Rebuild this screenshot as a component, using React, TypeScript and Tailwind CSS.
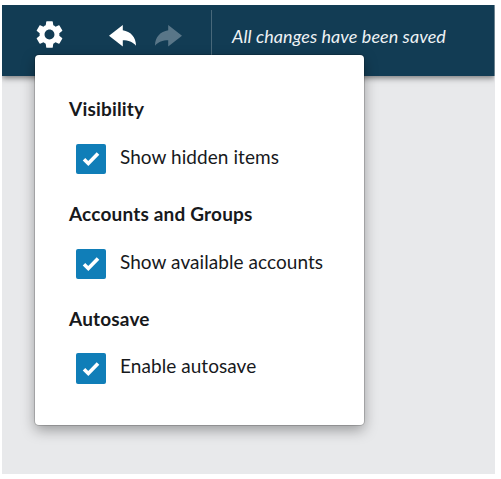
import React from "react";
import { MdSettings } from "react-icons/md";

function Arrow({ className }: { className: string }) {
  return (
    <svg className={className} viewBox="0 0 27 22">
      <path fill="currentColor" d="M0 10.800L13.800 0v5.300C21.500 6.500 27 12 27 20.800c-3.500-4.300-7.500-5.600-13.200-5.600v6.300z" />
    </svg>
  );
}

function Option({ title, label, tall }: { title: string; label: string; tall?: boolean }) {
  return (
    <section className="h-[105px]">
      <h2 className="h-6 whitespace-nowrap text-[19px] leading-6 font-bold tracking-[0.180px]">{title}</h2>
      <label className={`ml-[7px] flex items-center ${tall ? "mt-[22px]" : "mt-[23px]"}`}>
        <span className={`flex w-[30px] items-center justify-center rounded-[2px] bg-[#107eb8] ${tall ? "h-[31px]" : "h-[30px]"}`}>
          <svg className="h-4 w-[18px]" viewBox="0 0 18 16">
            <path d="M2 8.300l4.300 4.200L16 2.400" fill="none" stroke="#fff" strokeWidth="3.600" />
          </svg>
        </span>
        <span className="-mt-[5px] ml-[14px] whitespace-nowrap text-[19px] leading-6 tracking-[0.060px]">{label}</span>
      </label>
    </section>
  );
}

export default function App() {
  return (
    <div className="h-[479px] w-[501px] overflow-hidden bg-white pt-[5px] pl-[2px] font-['Lato',sans-serif] text-[#17191c]">
      <main className="relative h-[469px] w-[492.500px] bg-[#e8e9eb]">
        <header className="flex h-[71px] items-start bg-[#123c54] shadow-[0_2px_6px_rgba(0,0,0,0.5)] [clip-path:inset(0_0_-14px_0)]">
          <button className="mt-[13px] ml-[31px]"><MdSettings className="block size-[33px] text-white" /></button>
          <button className="mt-[20px] ml-[43px]"><Arrow className="block h-[22px] w-[27px] text-white" /></button>
          <button className="mt-[20px] ml-[19px]"><Arrow className="block h-[22px] w-[27px] -scale-x-100 text-[#597688]" /></button>
          <div className="mt-[5px] ml-[29px] h-[61px] w-px bg-[#48687a]" />
          <span className="mt-[19px] ml-[20px] whitespace-nowrap text-[18px] leading-6 tracking-[0.070px] text-[#eef2f4] italic">All changes have been saved</span>
        </header>
        <div className="absolute top-[50px] left-[33px] h-[370px] w-[329px] rounded-[4px] bg-white pt-[42px] pl-[34px] shadow-[0_0_0_1px_rgba(0,0,0,0.16),0_5px_14px_rgba(0,0,0,0.35)]">
          <Option title="Visibility" label="Show hidden items" />
          <Option title="Accounts and Groups" label="Show available accounts" />
          <Option title="Autosave" label="Enable autosave" tall />
        </div>
      </main>
    </div>
  );
}
